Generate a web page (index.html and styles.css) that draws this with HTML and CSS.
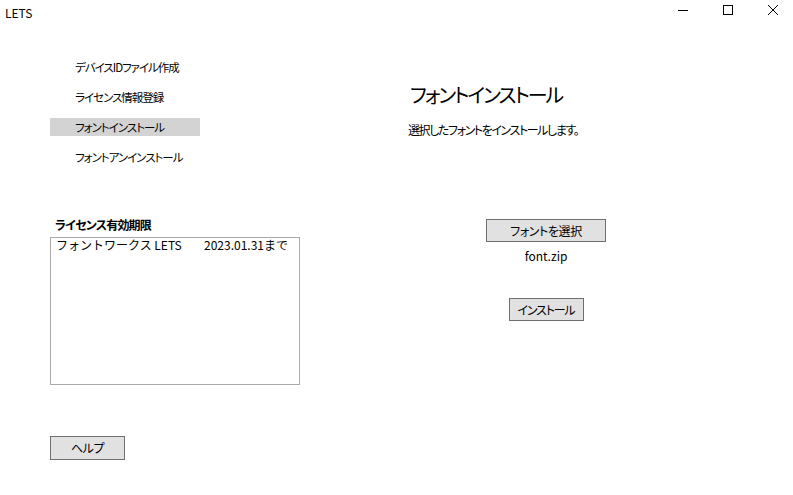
FILE: index.html
```html
<!DOCTYPE html>
<html lang="ja">
<head>
<meta charset="utf-8">
<title>LETS</title>
<link rel="stylesheet" href="styles.css">
</head>
<body>
<div class="window">
  <div class="titlebar">
    <span class="title">LETS</span>
    <div class="controls">
      <div class="ctl"><svg width="12" height="12" viewBox="0 0 12 12"><path d="M1 6.5H11" stroke="#000" stroke-width="1"/></svg></div>
      <div class="ctl"><svg width="12" height="12" viewBox="0 0 12 12"><rect x="1.5" y="1.5" width="9" height="9" fill="none" stroke="#000" stroke-width="1"/></svg></div>
      <div class="ctl"><svg width="12" height="12" viewBox="0 0 12 12"><path d="M1 1L11 11M11 1L1 11" stroke="#000" stroke-width="1"/></svg></div>
    </div>
  </div>
  <div class="main">
    <div class="left">
      <ul class="nav">
        <li class="nav-item">デバイスIDファイル作成</li>
        <li class="nav-item">ライセンス情報登録</li>
        <li class="nav-item active">フォントインストール</li>
        <li class="nav-item">フォントアンインストール</li>
      </ul>
      <div class="license-label">ライセンス有効期限</div>
      <div class="license-box">
        <div class="license-row"><span class="lic-name">フォントワークス LETS</span><span class="lic-date">2023.01.31まで</span></div>
      </div>
      <button class="btn btn-help">ヘルプ</button>
    </div>
    <div class="right">
      <h1 class="heading">フォントインストール</h1>
      <p class="desc">選択したフォントをインストールします。</p>
      <div class="actions">
        <button class="btn btn-select">フォントを選択</button>
        <div class="filename">font.zip</div>
        <button class="btn btn-install">インストール</button>
      </div>
    </div>
  </div>
</div>
</body>
</html>
```
FILE: styles.css
```css
* { box-sizing: border-box; }
html, body {
  margin: 0;
  padding: 0;
  background: #ffffff;
}
body {
  font-family: "Noto Sans CJK JP", "Noto Sans", sans-serif;
  font-size: 12px;
  font-feature-settings: "palt";
  color: #000;
  width: 793px;
  height: 495px;
  overflow: hidden;
  white-space: nowrap;
}
.titlebar {
  height: 30px;
  display: flex;
  align-items: center;
  justify-content: space-between;
}
.title {
  padding-left: 5px;
  font-size: 12px;
  line-height: 16px;
  margin-top: -4px;
}
.controls {
  display: flex;
  height: 30px;
  margin-right: -2px;
}
.ctl {
  width: 45px;
  height: 30px;
  display: flex;
  align-items: center;
  justify-content: center;
  margin-top: -5px;
}
.main {
  display: flex;
}
.left {
  width: 300px;
  padding-left: 50px;
  display: flex;
  flex-direction: column;
}
.nav {
  list-style: none;
  margin: 28px 0 0 0;
  padding: 0;
  display: flex;
  flex-direction: column;
  gap: 12px;
}
.nav-item {
  width: 150px;
  height: 18px;
  line-height: 18px;
  padding-left: 25px;
  font-size: 11.5px;
  letter-spacing: -1px;
}
.nav-item.active {
  background: #d3d3d3;
}
.license-label {
  margin-top: 51px;
  padding-left: 5px;
  font-weight: bold;
  line-height: 16px;
  height: 16px;
  letter-spacing: -0.8px;
}
.license-box {
  margin-top: 4px;
  width: 250px;
  height: 148px;
  border: 1px solid #a9a9a9;
  padding: 0 4px 0 5px;
}
.license-row {
  display: flex;
  line-height: 14px;
  font-size: 12px;
  font-feature-settings: normal;
}
.lic-name { width: 148px; }
.btn {
  font-family: inherit;
  font-size: 12px;
  font-feature-settings: "palt";
  letter-spacing: -0.4px;
  background: #e1e1e1;
  border: 1px solid #6f6f6f;
  color: #000;
  padding: 0;
  line-height: 20px;
}
.btn-help {
  margin-top: 51px;
  width: 75px;
  height: 24px;
}
.right {
  margin-left: 100px;
  width: 292px;
  display: flex;
  flex-direction: column;
}
.heading {
  margin: 52px 0 0 0;
  padding-left: 10px;
  font-size: 20px;
  font-weight: normal;
  line-height: 26px;
  letter-spacing: -2px;
}
.desc {
  margin: 14px 0 0 0;
  padding-left: 8px;
  line-height: 16px;
  letter-spacing: -1.4px;
}
.actions {
  margin-top: 81px;
  display: flex;
  flex-direction: column;
  align-items: center;
}
.btn-select {
  width: 120px;
  height: 23px;
}
.filename {
  margin-top: 6px;
  line-height: 16px;
}
.btn-install {
  margin-top: 34px;
  width: 75px;
  height: 23px;
  letter-spacing: -1.2px;
}
```
